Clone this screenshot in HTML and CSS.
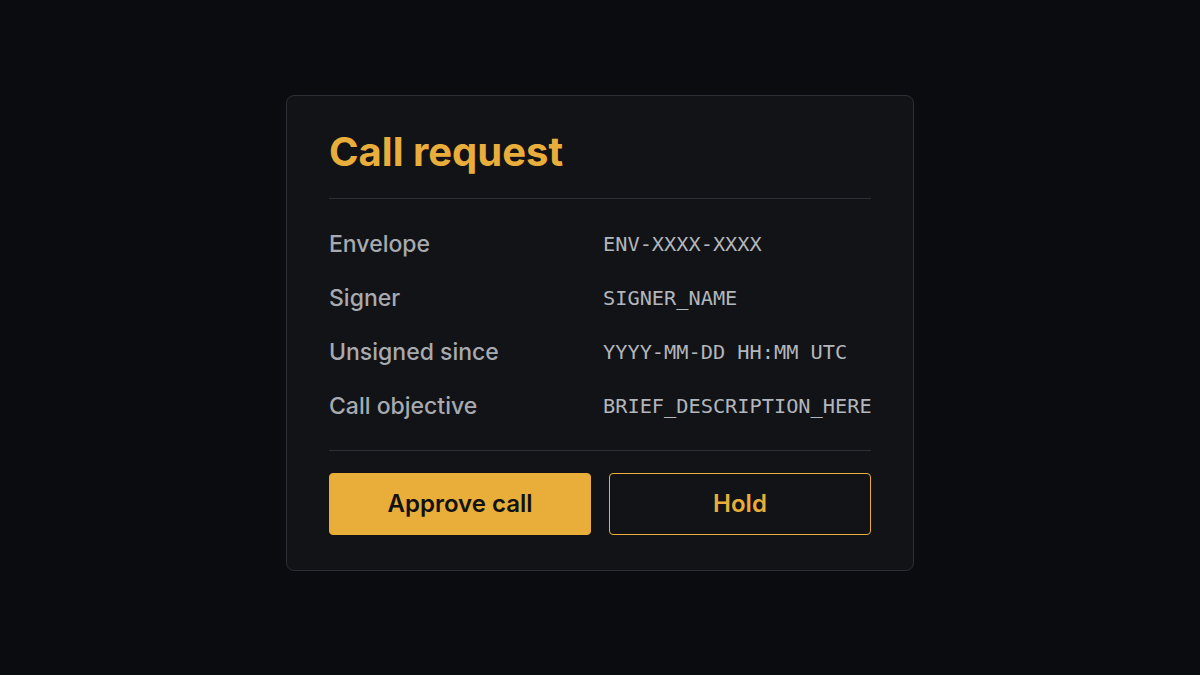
FILE: index.html
```html
<!DOCTYPE html>
<html lang="en">
<head>
    <meta charset="UTF-8">
    <meta name="viewport" content="width=device-width, initial-scale=1.0">
    <title>Call request</title>
    <link rel="stylesheet" href="styles.css">
</head>
<body>
    <div class="card">
        <h1 class="title">Call request</h1>
        <div class="details">
            <div class="row">
                <span class="label">Envelope</span>
                <span class="value">ENV-XXXX-XXXX</span>
            </div>
            <div class="row">
                <span class="label">Signer</span>
                <span class="value">SIGNER_NAME</span>
            </div>
            <div class="row">
                <span class="label">Unsigned since</span>
                <span class="value">YYYY-MM-DD HH:MM UTC</span>
            </div>
            <div class="row">
                <span class="label">Call objective</span>
                <span class="value">BRIEF_DESCRIPTION_HERE</span>
            </div>
        </div>
        <div class="actions">
            <button class="btn primary">Approve call</button>
            <button class="btn outline">Hold</button>
        </div>
    </div>
</body>
</html>
```

FILE: styles.css
```css
/* Page */
body {
  margin: 0;
  height: 665px;
  padding-bottom: 10px;
  display: flex;
  align-items: center;
  justify-content: center;
  background: #0a0c10;
  font-family: Inter, "Noto Sans", sans-serif;
}

/* Card */
.card {
  width: 542px;
  padding: 30px 42px 35px;
  background: #111317;
  border: 1px solid #2b2e34;
  border-radius: 8px;
}

.title {
  margin: 0;
  padding-bottom: 20px;
  border-bottom: 1px solid #2c2f35;
  color: #e8ad3a;
  font-size: 40px;
  font-weight: 700;
  line-height: 52px;
}

/* Detail rows */
.details {
  padding: 18px 0 17px;
  border-bottom: 1px solid #2c2f35;
}

.row {
  display: grid;
  grid-template-columns: 274px 1fr;
  align-items: center;
  height: 54px;
}

.label {
  color: #a7aaaf;
  font-size: 23px;
  font-weight: 500;
}

.value {
  color: #b3b6bb;
  font-family: "DejaVu Sans Mono", "Liberation Mono", monospace;
  font-size: 20.3px;
}

/* Buttons */
.actions {
  display: flex;
  gap: 18px;
  margin-top: 22px;
}

.btn {
  flex: 1;
  height: 62px;
  border-radius: 4px;
  font-family: Inter, "Noto Sans", sans-serif;
  font-size: 24px;
  font-weight: 600;
}

.primary {
  background: #e9ae3a;
  border: 1px solid #e9ae3a;
  color: #121212;
}

.outline {
  background: transparent;
  border: 1.5px solid #e9ae3a;
  color: #e9ae3a;
}
```
